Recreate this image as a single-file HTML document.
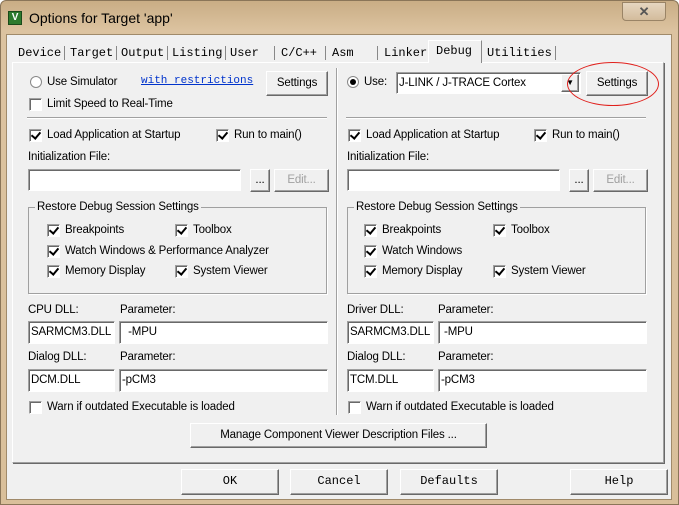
<!DOCTYPE html><html><head><style>
*{box-sizing:border-box;margin:0;padding:0}
body{width:679px;height:505px;overflow:hidden;background:#fff;font-family:"Liberation Sans",sans-serif;font-size:11.5px;letter-spacing:-0.15px;color:#000;position:relative}
.a{position:absolute;white-space:nowrap;line-height:14px}
.frame{position:absolute;left:0;top:0;width:679px;height:505px;background:linear-gradient(#c9ad85,#dcc3a0 30px,#d9bf9a);border:1px solid #8a7558;border-radius:6px 6px 0 0}
.client{position:absolute;left:6px;top:34px;width:666px;height:466px;background:#f0f0f0;border:1px solid #a08a6a}
.panel{position:absolute;left:12px;top:62px;width:652px;height:401px;border:1px solid #fff;border-right-color:#a0a0a0;border-bottom-color:#a0a0a0;box-shadow:1px 1px 0 #696969}
.mono{font-family:"Liberation Mono",monospace;font-size:12px;letter-spacing:0}
.tab{position:absolute;top:46px;line-height:14px;border-right:1px solid #888;padding-right:3px;font-family:"Liberation Mono",monospace;font-size:12px;letter-spacing:0}
.btn{position:absolute;background:#f0f0f0;border:1px solid #fff;border-right-color:#696969;border-bottom-color:#696969;box-shadow:inset -1px -1px 0 #a0a0a0;text-align:center;white-space:nowrap}
.inp{position:absolute;background:#fff;border:1px solid #a0a0a0;border-right-color:#fff;border-bottom-color:#fff;box-shadow:inset 1px 1px 0 #696969;padding-left:2px;line-height:20px;white-space:nowrap}
.cb{position:absolute;width:13px;height:13px;background:#fff;border:1px solid #a0a0a0;border-right-color:#fff;border-bottom-color:#fff;box-shadow:inset 1px 1px 0 #696969}
.cb.c::after{content:"";position:absolute;left:3px;top:0px;width:4px;height:7px;border:solid #000;border-width:0 2px 2px 0;transform:rotate(40deg)}
.rd{position:absolute;width:12px;height:12px;border-radius:50%;background:#fff;border:1px solid #888}
.grp{position:absolute;border:1px solid #a0a0a0;box-shadow:1px 1px 0 #fff}
.lbl{position:absolute;background:#f0f0f0;padding:0 2px;line-height:14px;white-space:nowrap}
</style></head><body>
<div class="frame"></div>
<div class="a" style="left:8px;top:11px;width:14px;height:14px;background:#2d7a2d;border:1px solid #1a4a1a;color:#fff;font-size:10px;font-weight:bold;text-align:center;line-height:12px">V</div>
<div class="a" style="left:29px;top:10px;font-size:14px;line-height:17px;letter-spacing:0">Options for Target 'app'</div>
<div class="a" style="left:622px;top:2px;width:44px;height:19px;border:1px solid #9a8466;border-radius:0 0 4px 4px;background:linear-gradient(#e6d6c0,#d3bc9c);color:#555;font-weight:bold;text-align:center;line-height:17px;font-size:13px">✕</div>
<div class="client"></div>
<div class="panel"></div>
<div class="tab" style="left:18px">Device</div>
<div class="tab" style="left:70px">Target</div>
<div class="tab" style="left:121px">Output</div>
<div class="tab" style="left:172px">Listing</div>
<div class="tab" style="left:230px;width:45px">User</div>
<div class="tab" style="left:281px;width:45px">C/C++</div>
<div class="tab" style="left:332px;width:46px">Asm</div>
<div class="tab" style="left:384px;border-right:none">Linker</div>
<div class="a" style="left:428px;top:40px;width:54px;height:23px;background:#f0f0f0;border:1px solid #fff;border-right-color:#888;border-bottom:none"></div>
<div class="a mono" style="left:436px;top:44px">Debug</div>
<div class="tab" style="left:487px">Utilities</div>
<div class="a" style="left:336px;top:68px;width:2px;height:347px;border-left:1px solid #a0a0a0;border-right:1px solid #fff"></div>
<div class="rd" style="left:30px;top:76px"></div>
<div class="a" style="left:47px;top:75px">Use Simulator</div>
<div class="a mono" style="left:141px;top:74px;color:#0033cc;text-decoration:underline;font-size:11px">with restrictions</div>
<div class="btn" style="left:266px;top:71px;width:62px;height:25px;line-height:22px">Settings</div>
<div class="cb" style="left:29px;top:98px"></div>
<div class="a" style="left:47px;top:97px">Limit Speed to Real-Time</div>
<div class="a" style="left:27px;top:117px;width:300px;height:2px;border-top:1px solid #a0a0a0;border-bottom:1px solid #fff"></div>
<div class="cb c" style="left:29px;top:129px"></div><div class="a" style="left:47px;top:128px">Load Application at Startup</div>
<div class="cb c" style="left:216px;top:129px"></div><div class="a" style="left:234px;top:128px">Run to main()</div>
<div class="a" style="left:28px;top:150px">Initialization File:</div>
<div class="inp" style="left:28px;top:169px;width:213px;height:22px"></div>
<div class="btn" style="left:250px;top:169px;width:20px;height:23px;line-height:20px">...</div>
<div class="btn" style="left:274px;top:169px;width:55px;height:23px;line-height:20px;color:#a0a0a0">Edit...</div>
<div class="grp" style="left:28px;top:207px;width:299px;height:87px"></div>
<div class="lbl" style="left:35px;top:200px">Restore Debug Session Settings</div>
<div class="cb c" style="left:47px;top:224px"></div><div class="a" style="left:65px;top:223px">Breakpoints</div>
<div class="cb c" style="left:175px;top:224px"></div><div class="a" style="left:193px;top:223px">Toolbox</div>
<div class="cb c" style="left:47px;top:245px"></div><div class="a" style="left:65px;top:244px">Watch Windows &amp; Performance Analyzer</div>
<div class="cb c" style="left:47px;top:265px"></div><div class="a" style="left:65px;top:264px">Memory Display</div>
<div class="cb c" style="left:175px;top:265px"></div><div class="a" style="left:193px;top:264px">System Viewer</div>
<div class="a" style="left:28px;top:303px">CPU DLL:</div><div class="a" style="left:120px;top:303px">Parameter:</div>
<div class="inp" style="left:28px;top:321px;width:87px;height:23px">SARMCM3.DLL</div>
<div class="inp" style="left:119px;top:321px;width:209px;height:23px">&nbsp;&nbsp;-MPU</div>
<div class="a" style="left:28px;top:350px">Dialog DLL:</div><div class="a" style="left:120px;top:350px">Parameter:</div>
<div class="inp" style="left:28px;top:369px;width:87px;height:23px">DCM.DLL</div>
<div class="inp" style="left:119px;top:369px;width:209px;height:23px">-pCM3</div>
<div class="cb" style="left:29px;top:401px"></div><div class="a" style="left:47px;top:400px">Warn if outdated Executable is loaded</div>
<div class="rd" style="left:347px;top:76px"></div><div class="a" style="left:350px;top:79px;width:6px;height:6px;border-radius:50%;background:#000"></div>
<div class="a" style="left:364px;top:75px">Use:</div>
<div class="inp" style="left:396px;top:72px;width:185px;height:22px">J-LINK / J-TRACE Cortex</div>
<div class="btn" style="left:561px;top:74px;width:18px;height:18px;font-size:8px;line-height:16px">▼</div>
<div class="btn" style="left:586px;top:71px;width:62px;height:25px;line-height:22px">Settings</div>
<div class="a" style="left:567px;top:62px;width:92px;height:44px;border:1.5px solid #e0201c;border-radius:50%"></div>
<div class="a" style="left:346px;top:117px;width:300px;height:2px;border-top:1px solid #a0a0a0;border-bottom:1px solid #fff"></div>
<div class="cb c" style="left:348px;top:129px"></div><div class="a" style="left:366px;top:128px">Load Application at Startup</div>
<div class="cb c" style="left:534px;top:129px"></div><div class="a" style="left:552px;top:128px">Run to main()</div>
<div class="a" style="left:347px;top:150px">Initialization File:</div>
<div class="inp" style="left:347px;top:169px;width:213px;height:22px"></div>
<div class="btn" style="left:569px;top:169px;width:20px;height:23px;line-height:20px">...</div>
<div class="btn" style="left:593px;top:169px;width:55px;height:23px;line-height:20px;color:#a0a0a0">Edit...</div>
<div class="grp" style="left:347px;top:207px;width:299px;height:87px"></div>
<div class="lbl" style="left:354px;top:200px">Restore Debug Session Settings</div>
<div class="cb c" style="left:364px;top:224px"></div><div class="a" style="left:382px;top:223px">Breakpoints</div>
<div class="cb c" style="left:493px;top:224px"></div><div class="a" style="left:511px;top:223px">Toolbox</div>
<div class="cb c" style="left:364px;top:245px"></div><div class="a" style="left:382px;top:244px">Watch Windows</div>
<div class="cb c" style="left:364px;top:265px"></div><div class="a" style="left:382px;top:264px">Memory Display</div>
<div class="cb c" style="left:493px;top:265px"></div><div class="a" style="left:511px;top:264px">System Viewer</div>
<div class="a" style="left:347px;top:303px">Driver DLL:</div><div class="a" style="left:438px;top:303px">Parameter:</div>
<div class="inp" style="left:347px;top:321px;width:87px;height:23px">SARMCM3.DLL</div>
<div class="inp" style="left:438px;top:321px;width:209px;height:23px">&nbsp;-MPU</div>
<div class="a" style="left:347px;top:350px">Dialog DLL:</div><div class="a" style="left:438px;top:350px">Parameter:</div>
<div class="inp" style="left:347px;top:369px;width:87px;height:23px">TCM.DLL</div>
<div class="inp" style="left:438px;top:369px;width:209px;height:23px">-pCM3</div>
<div class="cb" style="left:348px;top:401px"></div><div class="a" style="left:366px;top:400px">Warn if outdated Executable is loaded</div>
<div class="btn" style="left:190px;top:423px;width:297px;height:25px;line-height:22px">Manage Component Viewer Description Files ...</div>
<div class="btn mono" style="left:181px;top:469px;width:98px;height:26px;line-height:23px">OK</div>
<div class="btn mono" style="left:290px;top:469px;width:98px;height:26px;line-height:23px">Cancel</div>
<div class="btn mono" style="left:400px;top:469px;width:98px;height:26px;line-height:23px">Defaults</div>
<div class="btn mono" style="left:570px;top:469px;width:98px;height:26px;line-height:23px">Help</div>
</body></html>
